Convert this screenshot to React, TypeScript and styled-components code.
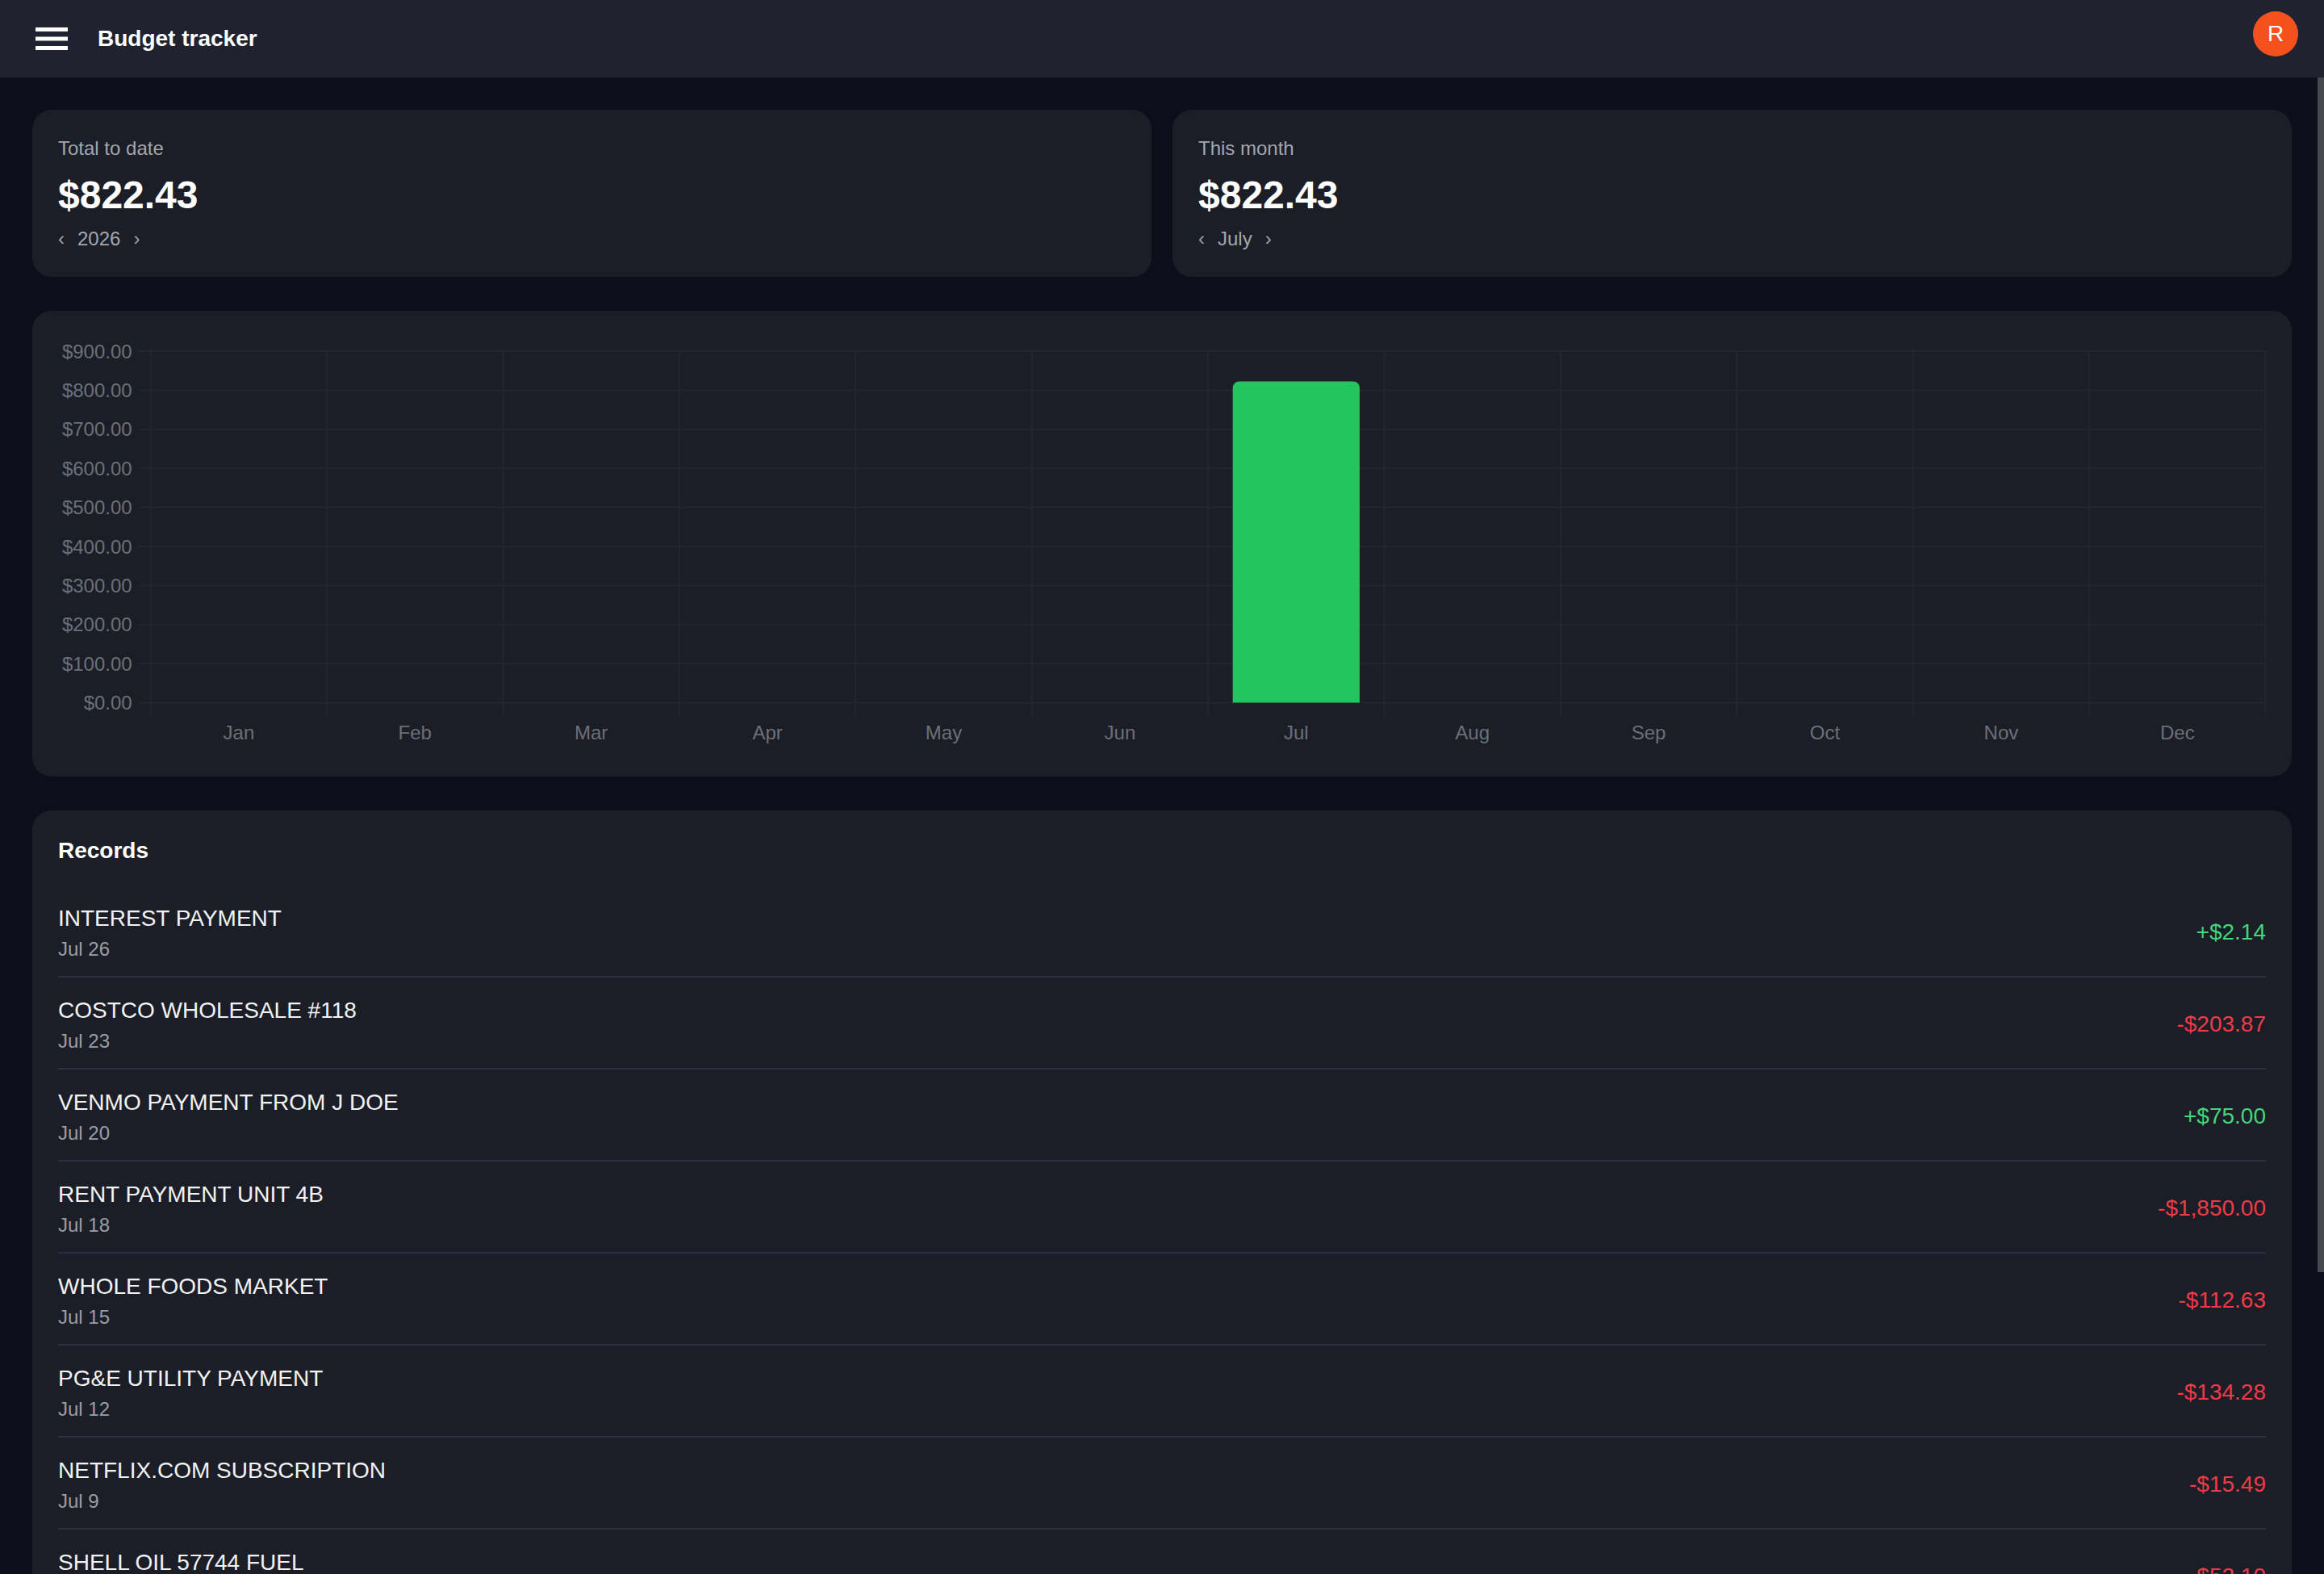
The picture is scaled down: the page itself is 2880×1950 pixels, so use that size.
import React from "react";
import styled, { createGlobalStyle } from "styled-components";

const GlobalStyle = createGlobalStyle`
  html, body {
    margin: 0;
    padding: 0;
    height: 100%;
    background: #0c0e19;
    overflow: hidden;
  }
  body {
    font-family: "Liberation Sans", Arial, Helvetica, sans-serif;
    color: #ffffff;
  }
  #root { height: 100%; }
  * { box-sizing: border-box; }
`;

const Page = styled.div`
  position: relative;
  display: flex;
  flex-direction: column;
  height: 100vh;
`;

const TopBar = styled.header`
  flex: 0 0 96px;
  height: 96px;
  display: flex;
  align-items: center;
  padding: 0 32px 0 44px;
  background: #20222f;
`;

const MenuButton = styled.button`
  display: flex;
  padding: 0;
  border: 0;
  background: none;
  cursor: pointer;
`;

const Title = styled.h1`
  margin: 0 0 0 37px;
  font-size: 28px;
  line-height: 36px;
  font-weight: 700;
  color: #ffffff;
`;

const Avatar = styled.div`
  margin-left: auto;
  align-self: flex-start;
  margin-top: 14px;
  width: 56px;
  height: 56px;
  border-radius: 50%;
  background: #f4511e;
  color: #ffffff;
  font-size: 28px;
  display: flex;
  align-items: center;
  justify-content: center;
`;

const Main = styled.main`
  flex: 1 1 auto;
  overflow-y: auto;
  scrollbar-width: none;
  padding: 40px 40px 40px 40px;
  display: flex;
  flex-direction: column;
  gap: 42px;

  &::-webkit-scrollbar { display: none; }
`;

const ScrollThumb = styled.div`
  position: absolute;
  top: 96px;
  right: 0;
  width: 8px;
  height: 1480px;
  background: #48494e;
  pointer-events: none;
`;

const SummaryRow = styled.section`
  display: grid;
  grid-template-columns: 1fr 1fr;
  gap: 26px;
`;

const Card = styled.div`
  background: #1c1e27;
  border-radius: 24px;
`;

const SummaryCard = styled(Card)`
  padding: 30px 32px 29px;
  display: flex;
  flex-direction: column;
`;

const Label = styled.div`
  font-size: 24px;
  line-height: 36px;
  color: #a3a6ae;
`;

const Amount = styled.div`
  margin-top: 11px;
  font-size: 48px;
  line-height: 58px;
  font-weight: 700;
  color: #ffffff;
`;

const Period = styled.div`
  margin-top: 7px;
  display: flex;
  align-items: center;
  gap: 16px;
  font-size: 24px;
  line-height: 36px;
  color: #a3a6ae;
`;

const Chevron = styled.button`
  padding: 0;
  border: 0;
  background: none;
  color: #9ea1a9;
  font-family: inherit;
  font-size: 24px;
  line-height: 36px;
  cursor: pointer;
`;

const ChartCard = styled(Card)`
  padding: 32px 32px 36px;
`;

const ChartSvg = styled.svg`
  display: block;
  width: 2736px;
  height: 509px;
  font-family: "Liberation Sans", Arial, sans-serif;
`;

const RecordsCard = styled(Card)`
  padding: 32px;
`;

const RecordsTitle = styled.h2`
  margin: 0 0 25px;
  font-size: 28px;
  line-height: 36px;
  font-weight: 700;
  color: #ffffff;
`;

const RecordList = styled.ul`
  list-style: none;
  margin: 0;
  padding: 0;
`;

const RecordRow = styled.li`
  display: flex;
  align-items: center;
  justify-content: space-between;
  padding: 20px 0 16px;
  border-bottom: 2px solid #2c2e43;
  &:last-child { border-bottom: 0; }
`;

const RecordInfo = styled.div`
  display: flex;
  flex-direction: column;
`;

const RecordName = styled.div`
  font-size: 28px;
  line-height: 42px;
  color: #f2f2f4;
`;

const RecordDate = styled.div`
  font-size: 24px;
  line-height: 34px;
  color: #9a9da5;
`;

const RecordAmount = styled.div<{ $positive: boolean }>`
  font-size: 28px;
  line-height: 42px;
  color: ${(p) => (p.$positive ? "#43d67a" : "#f03a47")};
`;

const months = ["Jan", "Feb", "Mar", "Apr", "May", "Jun", "Jul", "Aug", "Sep", "Oct", "Nov", "Dec"];
const monthValues = [0, 0, 0, 0, 0, 0, 822.43, 0, 0, 0, 0, 0];

const records = [
  { name: "INTEREST PAYMENT", date: "Jul 26", amount: 2.14 },
  { name: "COSTCO WHOLESALE #118", date: "Jul 23", amount: -203.87 },
  { name: "VENMO PAYMENT FROM J DOE", date: "Jul 20", amount: 75.0 },
  { name: "RENT PAYMENT UNIT 4B", date: "Jul 18", amount: -1850.0 },
  { name: "WHOLE FOODS MARKET", date: "Jul 15", amount: -112.63 },
  { name: "PG&E UTILITY PAYMENT", date: "Jul 12", amount: -134.28 },
  { name: "NETFLIX.COM SUBSCRIPTION", date: "Jul 9", amount: -15.49 },
  { name: "SHELL OIL 57744 FUEL", date: "Jul 7", amount: -52.1 },
  { name: "TRADER JOE'S #552", date: "Jul 5", amount: -75.35 },
  { name: "SPOTIFY USA", date: "Jul 3", amount: -10.99 },
  { name: "PAYROLL DIRECT DEPOSIT ACME CORP", date: "Jul 1", amount: 3200.0 },
];

const fmt = (v: number) =>
  "$" + Math.abs(v).toLocaleString("en-US", { minimumFractionDigits: 2, maximumFractionDigits: 2 });

const MenuIcon = () => (
  <svg width="40" height="28" viewBox="0 0 40 28" fill="#ffffff">
    <rect x="0" y="0" width="40" height="5" />
    <rect x="0" y="11.5" width="40" height="5" />
    <rect x="0" y="23" width="40" height="5" />
  </svg>
);

const Chart = () => {
  const plotLeft = 114.7;
  const colW = 218.4;
  const plotRight = plotLeft + colW * 12;
  const zeroY = 453.6;
  const step = 48.4;
  const yOf = (v: number) => zeroY - (v / 100) * step;
  const topY = yOf(900);
  const grid = "#23252f";
  const labelColor = "#6c6f77";
  const barW = colW * 0.72;
  const r = 9;
  return (
    <ChartSvg viewBox="0 0 2736 509">
      {Array.from({ length: 10 }, (_, i) => {
        const y = yOf(i * 100);
        return (
          <g key={"h" + i}>
            <line x1={plotLeft - 16} x2={plotRight} y1={y} y2={y} stroke={grid} strokeWidth={2} />
            <text x={plotLeft - 23} y={y} fill={labelColor} fontSize={24} textAnchor="end" dominantBaseline="central">
              {"$" + (i * 100).toFixed(2)}
            </text>
          </g>
        );
      })}
      {Array.from({ length: 13 }, (_, i) => {
        const x = plotLeft + i * colW;
        return <line key={"v" + i} x1={x} x2={x} y1={topY} y2={zeroY + 16} stroke={grid} strokeWidth={2} />;
      })}
      {months.map((m, i) => {
        const cx = plotLeft + colW * (i + 0.5);
        const v = monthValues[i];
        const top = yOf(v);
        const x0 = cx - barW / 2;
        const x1 = cx + barW / 2;
        return (
          <g key={m}>
            {v > 0 && (
              <path
                d={`M${x0},${zeroY} L${x0},${top + r} Q${x0},${top} ${x0 + r},${top} L${x1 - r},${top} Q${x1},${top} ${x1},${top + r} L${x1},${zeroY} Z`}
                fill="#22c55e"
              />
            )}
            <text x={cx} y={490.5} fill={labelColor} fontSize={24} textAnchor="middle" dominantBaseline="central">
              {m}
            </text>
          </g>
        );
      })}
    </ChartSvg>
  );
};

const SummaryBlock = ({ label, amount, period }: { label: string; amount: string; period: string }) => (
  <SummaryCard>
    <Label>{label}</Label>
    <Amount>{amount}</Amount>
    <Period>
      <Chevron aria-label="previous">‹</Chevron>
      <span>{period}</span>
      <Chevron aria-label="next">›</Chevron>
    </Period>
  </SummaryCard>
);

export default function App() {
  return (
    <>
      <GlobalStyle />
      <Page>
        <TopBar>
          <MenuButton aria-label="menu">
            <MenuIcon />
          </MenuButton>
          <Title>Budget tracker</Title>
          <Avatar>R</Avatar>
        </TopBar>
        <Main>
          <SummaryRow>
            <SummaryBlock label="Total to date" amount="$822.43" period="2026" />
            <SummaryBlock label="This month" amount="$822.43" period="July" />
          </SummaryRow>
          <ChartCard>
            <Chart />
          </ChartCard>
          <RecordsCard>
            <RecordsTitle>Records</RecordsTitle>
            <RecordList>
              {records.map((r) => (
                <RecordRow key={r.name}>
                  <RecordInfo>
                    <RecordName>{r.name}</RecordName>
                    <RecordDate>{r.date}</RecordDate>
                  </RecordInfo>
                  <RecordAmount $positive={r.amount >= 0}>
                    {(r.amount >= 0 ? "+" : "-") + fmt(r.amount)}
                  </RecordAmount>
                </RecordRow>
              ))}
            </RecordList>
          </RecordsCard>
        </Main>
        <ScrollThumb />
      </Page>
    </>
  );
}
